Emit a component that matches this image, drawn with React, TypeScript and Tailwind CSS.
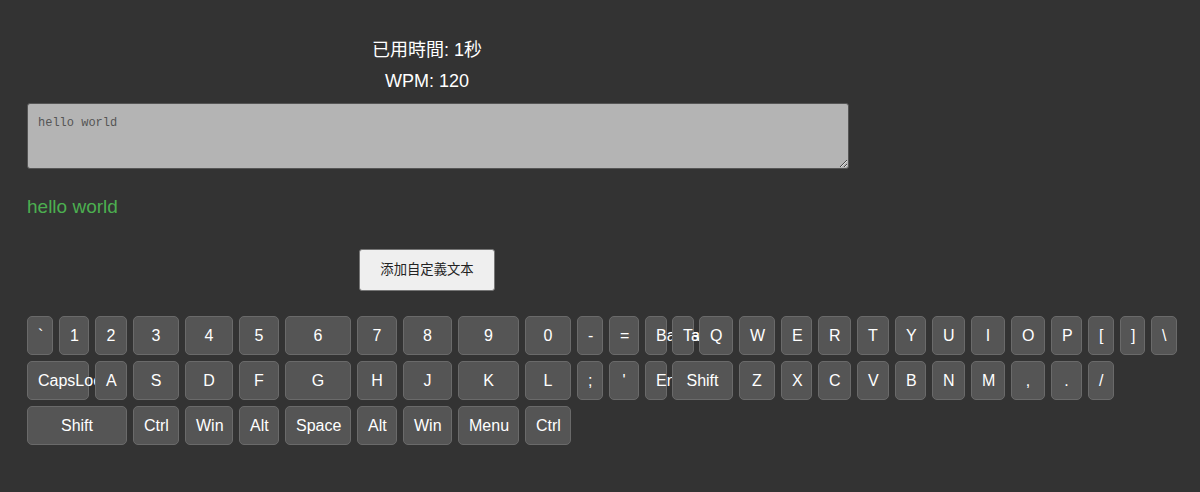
import React, { useState } from 'react';

type Key = { label: string; span?: number };

// 键盘三行，列宽由 grid 模板决定
const rows: Key[][] = [
  [
    { label: '`' }, { label: '1' }, { label: '2' }, { label: '3' }, { label: '4' },
    { label: '5' }, { label: '6' }, { label: '7' }, { label: '8' }, { label: '9' },
    { label: '0' }, { label: '-' }, { label: '=' }, { label: 'Backspace' }, { label: 'Tab' },
    { label: 'Q' }, { label: 'W' }, { label: 'E' }, { label: 'R' }, { label: 'T' },
    { label: 'Y' }, { label: 'U' }, { label: 'I' }, { label: 'O' }, { label: 'P' },
    { label: '[' }, { label: ']' }, { label: '\\' },
  ],
  [
    { label: 'CapsLock', span: 2 }, { label: 'A' }, { label: 'S' }, { label: 'D' },
    { label: 'F' }, { label: 'G' }, { label: 'H' }, { label: 'J' }, { label: 'K' },
    { label: 'L' }, { label: ';' }, { label: "'" }, { label: 'Enter' },
    { label: 'Shift', span: 2 }, { label: 'Z' }, { label: 'X' }, { label: 'C' },
    { label: 'V' }, { label: 'B' }, { label: 'N' }, { label: 'M' }, { label: ',' },
    { label: '.' }, { label: '/' },
  ],
  [
    { label: 'Shift', span: 3 }, { label: 'Ctrl' }, { label: 'Win' }, { label: 'Alt' },
    { label: 'Space' }, { label: 'Alt' }, { label: 'Win' }, { label: 'Menu' }, { label: 'Ctrl' },
  ],
];

const spanClass: Record<number, string> = {
  1: '',
  2: 'col-span-2',
  3: 'col-span-3',
};

export default function App() {
  const [text, setText] = useState('hello world');

  return (
    <div
      className="min-h-screen bg-[#333333] pl-[27px] pt-[39px] text-white"
      style={{ fontFamily: '"Liberation Sans", Arial, "Noto Sans CJK TC", sans-serif' }}
    >
      <div className="w-[800px]">
        <div className="text-center text-[18px] leading-[22px]">已用時間: 1秒</div>
        <div className="mt-[9px] text-center text-[18px] leading-[22px]">WPM: 120</div>

        <textarea
          value={text}
          onChange={e => setText(e.target.value)}
          className="mt-[11px] block h-[66px] w-[822px] rounded-[3px] border border-[#555555] bg-[#b4b4b4] px-[10px] py-[10px] text-[12px] leading-[18px] text-[#555555] outline-none"
          style={{ fontFamily: '"Liberation Mono", "DejaVu Sans Mono", monospace' }}
        />

        <div className="mt-[27px] text-[19px] leading-[22px] text-[#4caf50]">hello world</div>

        <div className="mt-[31px] flex justify-center">
          <button className="h-[42px] w-[136px] rounded-[3px] border border-[#767676] bg-[#efefef] text-[13.33px] text-[#222222]">
            添加自定義文本
          </button>
        </div>
      </div>

      <div className="mt-[25px] grid grid-cols-[26px_30px_32px_46px_48px_40px_66px_40px_49px_61px_46px_26px_30px_21px_21px_34px_36px_31px_33px_32px_31px_33px_34px_34px_31px_26px_25px_26px] gap-[6px]">
        {rows.map((row, ri) =>
          row.map((k, ki) => (
            <div
              key={`${ri}-${ki}`}
              className={`${spanClass[k.span ?? 1]} ${ki === 0 ? 'col-start-1' : ''} h-[39px] whitespace-nowrap rounded-[5px] border border-[#6a6a6a] bg-[#555555] px-[10px] text-center text-[16px] leading-[37px] text-white`}
            >
              {k.label === 'Backspace' ? (
                <span className="inline-block max-w-[76px] overflow-hidden align-top">{k.label}</span>
              ) : (
                k.label
              )}
            </div>
          ))
        )}
      </div>
    </div>
  );
}
